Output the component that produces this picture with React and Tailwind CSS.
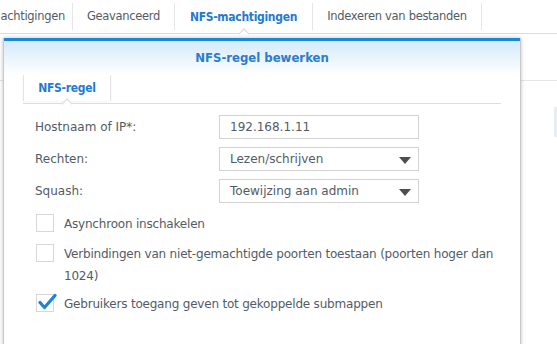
import React from "react";

const tabs = [
  { label: "achtigingen", w: "w-[73px] justify-end pr-[7px]" },
  { label: "Geavanceerd", w: "w-[102px] justify-center" },
  { label: "NFS-machtigingen", w: "w-[138px] justify-center", active: true },
  { label: "Indexeren van bestanden", w: "w-[169px] justify-center" },
];
const cond = { fontFamily: '"DejaVu Sans Condensed", "DejaVu Sans", Verdana, sans-serif' };

const Caret = ({ className }) => (
  <span className={`absolute w-[8px] h-[8px] rotate-45 bg-white border-l border-t border-[#d9d9d9] ${className}`} />
);

const Field = ({ label, value, select }) => (
  <div className="flex items-center h-[24px]">
    <span className="w-[184px]">{label}</span>
    <div className="relative w-[200px] h-[24px] border border-[#d3d3d3] bg-white flex items-center pl-[10px]">
      <span>{value}</span>
      {select && (
        <svg className="absolute right-[7px] top-[9px]" width="12" height="7" viewBox="0 0 12 7">
          <path d="M0 0h12L6 7z" fill="#4a4f55" />
        </svg>
      )}
    </div>
  </div>
);

const Check = ({ checked, children }) => (
  <div className="flex items-start">
    <div className="relative w-[18px] h-[18px] border border-[#d7d7d7] bg-white shrink-0">
      {checked && (
        <svg className="absolute left-[1px] top-[-2px]" width="19" height="18" viewBox="0 0 19 18">
          <path d="M2 9.5l4.5 5L17 2.5" fill="none" stroke="#1a84da" strokeWidth="3.2" strokeLinecap="round" strokeLinejoin="round" />
        </svg>
      )}
    </div>
    <div className="ml-[10px] leading-[22px] -mt-[1px] w-[445px] tracking-[-0.2px]">{children}</div>
  </div>
);

export default function App() {
  return (
    <div className="relative w-[557px] h-[344px] overflow-hidden bg-white text-[12px] text-[#525b66]" style={{ fontFamily: '"DejaVu Sans", Verdana, sans-serif' }}>
      {/* page tab bar */}
      <div className="relative h-[34px] border-b border-[#dcdcdc] flex items-center text-[11.5px] tracking-[-0.3px]">
        {tabs.map((t) => (
          <div
            key={t.label}
            className={`${t.w} shrink-0 h-[27px] flex items-center border-r border-[#e6e6e6] ${t.active ? "font-bold text-[#1f7ad1] text-[12px]" : ""}`}
            style={t.active ? cond : undefined}
          >
            {t.label}
          </div>
        ))}
        <Caret className="left-[240px] top-[30px]" />
      </div>

      {/* background page behind dialog */}
      <div className="absolute left-0 top-[80px] w-[557px] h-px bg-[#e6e6e6]" />
      <div className="absolute right-0 top-[107px] w-[3px] h-[30px] bg-[#e8edf2]" />

      {/* dialog */}
      <div className="absolute left-[3px] top-[38px] w-[518px] h-[320px] bg-white border-x border-[#c9c9c9] shadow-[0_0_4px_rgba(0,0,0,0.25)]">
        <div className="h-[3px] bg-[#1d87d7]" />
        <div className="h-[34px] bg-gradient-to-b from-[#d4eafb] to-white flex items-center justify-center text-[13px] font-bold text-[#2b7bd0]" style={cond}>
          NFS-regel bewerken
        </div>
        <div className="relative mx-[19px] h-[29px] border-b border-[#dddddd]">
          <div
            className="w-[88px] h-[26px] border-x border-[#e4e4e4] flex items-center justify-center font-bold text-[#1f7ad1] tracking-[-0.3px] shadow-[0_1px_2px_rgba(0,0,0,0.05)]"
            style={cond}
          >
            NFS-regel
          </div>
          <Caret className="left-[40px] top-[25px]" />
        </div>

        <div className="pl-[31px] pt-[11px] flex flex-col gap-[8px]">
          <Field label="Hostnaam of IP*:" value="192.168.1.11" />
          <Field label="Rechten:" value="Lezen/schrijven" select />
          <Field label="Squash:" value="Toewijzing aan admin" select />
        </div>

        <div className="pl-[32px] pt-[11px] flex flex-col">
          <Check>Asynchroon inschakelen</Check>
          <div className="h-[9px]" />
          <Check>Verbindingen van niet-gemachtigde poorten toestaan (poorten hoger dan 1024)</Check>
          <div className="h-[7px]" />
          <Check checked>Gebruikers toegang geven tot gekoppelde submappen</Check>
        </div>
      </div>
    </div>
  );
}
